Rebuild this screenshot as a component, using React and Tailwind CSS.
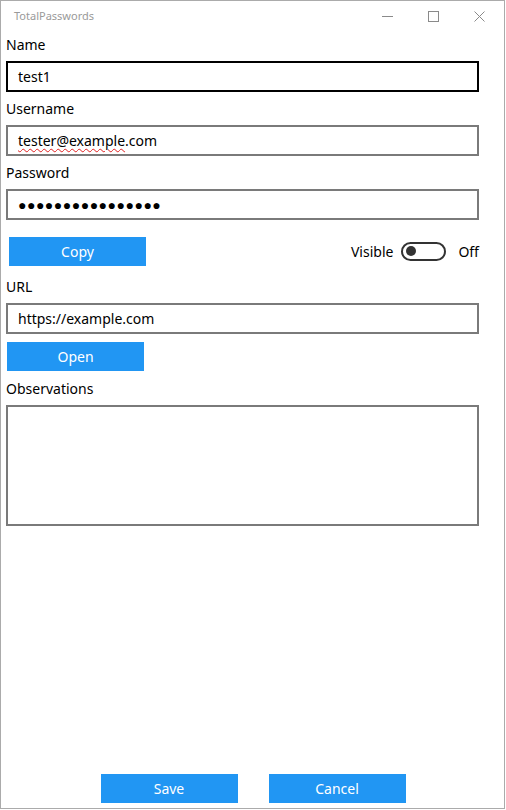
import React from 'react';

const font = { fontFamily: '"Noto Sans", "Open Sans", sans-serif' };

function Field({ label, children }) {
  return (
    <div className="flex flex-col">
      <div className="h-[33px] flex items-center text-[14px] text-black leading-none">{label}</div>
      {children}
    </div>
  );
}

function Input({ value, active, spell }) {
  return (
    <div
      className={`h-[31px] w-[473px] border-2 ${active ? 'border-black' : 'border-[#7a7a7a]'} flex items-center pl-[10px] text-[14px] text-black`}
    >
      {spell ? (
        <span>
          <span className="underline decoration-wavy decoration-[#e02020] decoration-1 underline-offset-2">tester@example</span>
          .com
        </span>
      ) : (
        value
      )}
    </div>
  );
}

function BlueButton({ children, className = '' }) {
  return (
    <button className={`h-[29px] w-[137px] bg-[#2196f3] text-white text-[14px] flex items-center justify-center ${className}`}>
      {children}
    </button>
  );
}

export default function App() {
  return (
    <div className="w-[506px] h-[810px] bg-white" style={font}>
      <div className="w-[505px] h-[809px] border border-[#ababab] flex flex-col relative">
        {/* title bar */}
        <div className="h-[31px] flex items-center pl-[13px] shrink-0">
          <span className="text-[11px] text-[#9a9a9a]">TotalPasswords</span>
          <div className="ml-auto flex items-center h-full">
            <div className="w-[46px] flex justify-center">
              <div className="w-[11px] h-px bg-[#8a8a8a]" />
            </div>
            <div className="w-[46px] flex justify-center">
              <div className="w-[11px] h-[11px] border border-[#8a8a8a]" />
            </div>
            <div className="w-[46px] flex justify-center mr-[2px]">
              <svg width="11" height="11" viewBox="0 0 11 11">
                <path d="M0.5 0.5 L10.5 10.5 M10.5 0.5 L0.5 10.5" stroke="#8a8a8a" strokeWidth="1" />
              </svg>
            </div>
          </div>
        </div>

        <div className="flex flex-col pl-[5px] -mt-[4px]">
          <Field label="Name">
            <Input value="test1" active />
          </Field>
          <Field label="Username">
            <Input spell />
          </Field>
          <Field label="Password">
            <Input value={<span className="tracking-[0.5px] text-[14px]">●●●●●●●●●●●●●●●●</span>} />
          </Field>

          <div className="flex items-center h-[30px] mt-[16px] w-[473px]">
            <BlueButton className="ml-[3px]">Copy</BlueButton>
            <div className="ml-auto flex items-center text-[14px]">
              <span>Visible</span>
              <div className="ml-[8px] w-[45px] h-[19px] rounded-full border-2 border-[#333] flex items-center pl-[3px]">
                <div className="w-[10px] h-[10px] rounded-full bg-[#333]" />
              </div>
              <span className="ml-[12px]">Off</span>
            </div>
          </div>

          <div className="mt-[4px]">
            <Field label="URL">
              <Input value="https://example.com" />
            </Field>
          </div>
          <BlueButton className="ml-[1px] mt-[8px]">Open</BlueButton>

          <div className="mt-[1px]">
            <Field label="Observations">
              <div className="h-[121px] w-[473px] border-2 border-[#7a7a7a]" />
            </Field>
          </div>
        </div>

        <div className="mt-auto flex justify-center gap-[31px] pb-[5px] pl-[1px]">
          <BlueButton>Save</BlueButton>
          <BlueButton>Cancel</BlueButton>
        </div>
      </div>
    </div>
  );
}
